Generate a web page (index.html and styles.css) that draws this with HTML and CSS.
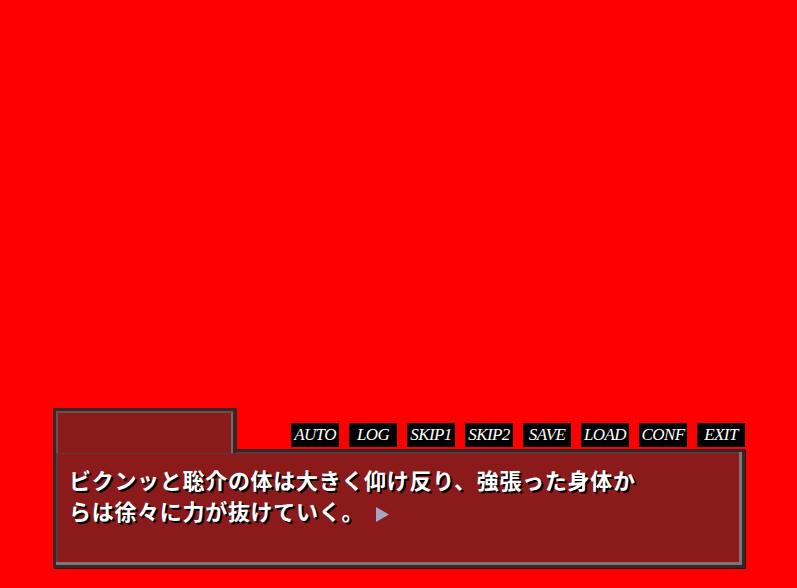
FILE: index.html
```html
<!DOCTYPE html>
<html lang="ja">
<head>
<meta charset="utf-8">
<link rel="stylesheet" href="styles.css">
</head>
<body>
<div class="stage">
  <div class="window">
    <div class="toprow">
      <div class="nametab"></div>
      <div class="buttons">
        <span class="btn">AUTO</span>
        <span class="btn">LOG</span>
        <span class="btn">SKIP1</span>
        <span class="btn">SKIP2</span>
        <span class="btn">SAVE</span>
        <span class="btn">LOAD</span>
        <span class="btn">CONF</span>
        <span class="btn">EXIT</span>
      </div>
    </div>
    <div class="msgbox">
      <p class="msg">ビクンッと聡介の体は大きく仰け反り、強張った身体か<br>らは徐々に力が抜けていく。<svg class="cursor" width="13" height="15" viewBox="0 0 13 15"><polygon points="0,0 13,7.5 0,15" fill="#a4a4c4"/></svg></p>
    </div>
  </div>
</div>
</body>
</html>
```
FILE: styles.css
```css
html, body {
  margin: 0;
  padding: 0;
  background: #ff0000;
}
.stage {
  width: 797px;
  height: 588px;
  display: flex;
  flex-direction: column;
  justify-content: flex-end;
  box-sizing: border-box;
  padding: 0 52px 20px 53px;
}
.window {
  display: flex;
  flex-direction: column;
}
.toprow {
  display: flex;
  align-items: flex-end;
  height: 42px;
}
.nametab {
  position: relative;
  z-index: 2;
  width: 184px;
  height: 45px;
  margin-bottom: -4px;
  box-sizing: border-box;
  background: #8b1a1a;
  border-top: 3px solid #3a2424;
  border-left: 3px solid #3a2424;
  border-right: 4px solid #3a2424;
  box-shadow: inset 2px 2px 0 #6a5050, inset -2px 0 0 #7a6868;
}
.buttons {
  display: flex;
  gap: 10px;
  margin-left: auto;
  padding-bottom: 2px;
}
.btn {
  display: flex;
  align-items: center;
  justify-content: center;
  width: 48px;
  height: 24px;
  background: #000;
  color: #fff;
  font-family: "Liberation Serif", serif;
  font-style: italic;
  font-size: 17px;
  letter-spacing: -0.6px;
  white-space: nowrap;
}
.msgbox {
  position: relative;
  height: 119px;
  box-sizing: border-box;
  background: #8b1a1a;
  border: 3px solid #3a2424;
  box-shadow: inset -3px -3px 0 #807474, inset 2px 2px 0 #5a3a3a, 1px 1px 0 #2a1414;
  padding: 12px 10px 0 13px;
}
.msg {
  margin: 0;
  color: #fff;
  font-family: "Noto Sans CJK JP", "Noto Sans", sans-serif;
  font-weight: bold;
  font-size: 22px;
  line-height: 31px;
  letter-spacing: 0.7px;
  text-shadow: 2px 2px 0 #000;
}
.cursor {
  display: inline-block;
  vertical-align: -2px;
  margin-left: 12px;
}
```
